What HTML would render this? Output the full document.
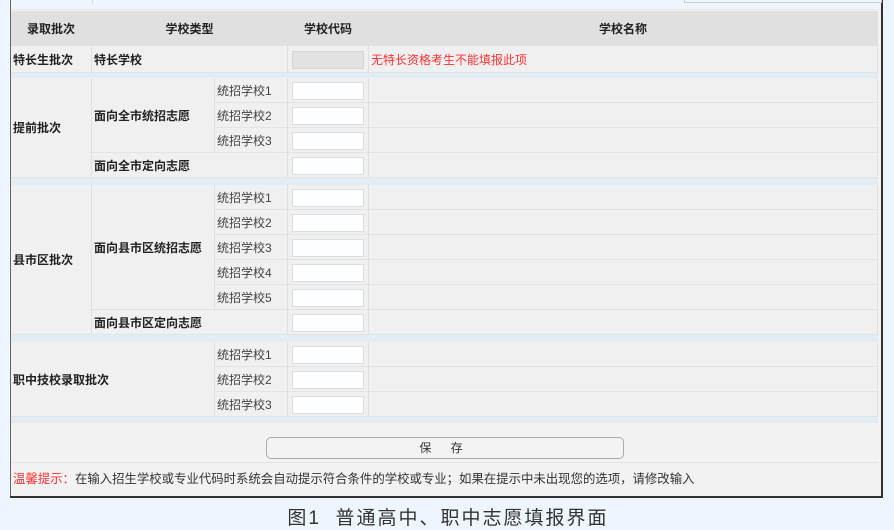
<!DOCTYPE html>
<html><head><meta charset="utf-8"><style>
*{margin:0;padding:0;box-sizing:border-box}
body{width:894px;height:529px;background:#eef5fd;position:relative;overflow:hidden;font-family:"Liberation Sans","Noto Sans CJK SC",sans-serif;font-size:12px;color:#222}
.c{position:absolute;background:#f0f0f0;border-right:1px solid #e0e0e0;border-bottom:1px solid #e3e3e3;display:flex;align-items:center;padding-left:2px;font-weight:bold}
.n{font-weight:normal;color:#444}
.h{background:#e0e0e0;justify-content:center;padding:0;font-weight:bold}
.sep{position:absolute;left:11px;width:867px;background:#e2ecf5}
.in{position:absolute;left:292px;width:72px;height:18px;background:#fdfeff;border:1px solid #ddd}
</style></head><body>
<div style="position:absolute;left:10px;top:0;width:1px;height:497px;background:#666"></div>
<div style="position:absolute;left:881px;top:0;width:2px;height:497px;background:#333"></div>
<div style="position:absolute;left:10px;top:496px;width:873px;height:2px;background:#333"></div>
<div style="position:absolute;left:92px;top:0;width:1px;height:4px;background:#ddd"></div>
<div style="position:absolute;left:684px;top:0;width:198px;height:3px;border:1px solid #ccc;border-top:0"></div>
<div style="position:absolute;left:11px;top:9px;width:870px;height:487px;background:#f2f2f2;border-top:1px solid #e8e8e8"></div>
<!-- header -->
<div class="c h" style="left:11px;top:11px;width:81px;height:35px">录取批次</div>
<div class="c h" style="left:92px;top:11px;width:196px;height:35px">学校类型</div>
<div class="c h" style="left:288px;top:11px;width:81px;height:35px">学校代码</div>
<div class="c h" style="left:369px;top:11px;width:509px;height:35px">学校名称</div>
<!-- 特长 -->
<div class="c" style="left:11px;top:46px;width:81px;height:27px">特长生批次</div>
<div class="c" style="left:92px;top:46px;width:196px;height:27px">特长学校</div>
<div class="c" style="left:288px;top:46px;width:81px;height:27px"><div style="position:absolute;left:4px;top:5px;width:72px;height:18px;background:#e2e2e2;border:1px solid #d6d6d6"></div></div>
<div class="c" style="left:369px;top:46px;width:509px;height:27px;color:#f33;font-weight:normal">无特长资格考生不能填报此项</div>
<div class="sep" style="top:73px;height:5px"></div>
<!-- 提前 -->
<div class="c" style="left:11px;top:78px;width:81px;height:100px">提前批次</div>
<div class="c" style="left:92px;top:78px;width:123px;height:75px">面向全市统招志愿</div>
<div class="c n" style="left:215px;top:78px;width:73px;height:25px">统招学校1</div>
<div class="c n" style="left:215px;top:103px;width:73px;height:25px">统招学校2</div>
<div class="c n" style="left:215px;top:128px;width:73px;height:25px">统招学校3</div>
<div class="c" style="left:92px;top:153px;width:196px;height:25px">面向全市定向志愿</div>
<div class="c" style="left:288px;top:78px;width:81px;height:25px"></div>
<div class="c" style="left:288px;top:103px;width:81px;height:25px"></div>
<div class="c" style="left:288px;top:128px;width:81px;height:25px"></div>
<div class="c" style="left:288px;top:153px;width:81px;height:25px"></div>
<div class="c" style="left:369px;top:78px;width:509px;height:25px"></div>
<div class="c" style="left:369px;top:103px;width:509px;height:25px"></div>
<div class="c" style="left:369px;top:128px;width:509px;height:25px"></div>
<div class="c" style="left:369px;top:153px;width:509px;height:25px"></div>
<div class="in" style="top:82px"></div><div class="in" style="top:107px"></div><div class="in" style="top:132px"></div><div class="in" style="top:157px"></div>
<div class="sep" style="top:178px;height:7px"></div>
<!-- 县市区 -->
<div class="c" style="left:11px;top:185px;width:81px;height:150px">县市区批次</div>
<div class="c" style="left:92px;top:185px;width:123px;height:125px">面向县市区统招志愿</div>
<div class="c n" style="left:215px;top:185px;width:73px;height:25px">统招学校1</div>
<div class="c n" style="left:215px;top:210px;width:73px;height:25px">统招学校2</div>
<div class="c n" style="left:215px;top:235px;width:73px;height:25px">统招学校3</div>
<div class="c n" style="left:215px;top:260px;width:73px;height:25px">统招学校4</div>
<div class="c n" style="left:215px;top:285px;width:73px;height:25px">统招学校5</div>
<div class="c" style="left:92px;top:310px;width:196px;height:25px">面向县市区定向志愿</div>
<div class="c" style="left:288px;top:185px;width:81px;height:25px"></div>
<div class="c" style="left:288px;top:210px;width:81px;height:25px"></div>
<div class="c" style="left:288px;top:235px;width:81px;height:25px"></div>
<div class="c" style="left:288px;top:260px;width:81px;height:25px"></div>
<div class="c" style="left:288px;top:285px;width:81px;height:25px"></div>
<div class="c" style="left:288px;top:310px;width:81px;height:25px"></div>
<div class="c" style="left:369px;top:185px;width:509px;height:25px"></div>
<div class="c" style="left:369px;top:210px;width:509px;height:25px"></div>
<div class="c" style="left:369px;top:235px;width:509px;height:25px"></div>
<div class="c" style="left:369px;top:260px;width:509px;height:25px"></div>
<div class="c" style="left:369px;top:285px;width:509px;height:25px"></div>
<div class="c" style="left:369px;top:310px;width:509px;height:25px"></div>
<div class="in" style="top:189px"></div><div class="in" style="top:214px"></div><div class="in" style="top:239px"></div><div class="in" style="top:264px"></div><div class="in" style="top:289px"></div><div class="in" style="top:314px"></div>
<div class="sep" style="top:335px;height:7px"></div>
<!-- 职中 -->
<div class="c" style="left:11px;top:342px;width:204px;height:75px">职中技校录取批次</div>
<div class="c n" style="left:215px;top:342px;width:73px;height:25px">统招学校1</div>
<div class="c n" style="left:215px;top:367px;width:73px;height:25px">统招学校2</div>
<div class="c n" style="left:215px;top:392px;width:73px;height:25px">统招学校3</div>
<div class="c" style="left:288px;top:342px;width:81px;height:25px"></div>
<div class="c" style="left:288px;top:367px;width:81px;height:25px"></div>
<div class="c" style="left:288px;top:392px;width:81px;height:25px"></div>
<div class="c" style="left:369px;top:342px;width:509px;height:25px"></div>
<div class="c" style="left:369px;top:367px;width:509px;height:25px"></div>
<div class="c" style="left:369px;top:392px;width:509px;height:25px"></div>
<div class="in" style="top:346px"></div><div class="in" style="top:371px"></div><div class="in" style="top:396px"></div>
<div class="sep" style="top:417px;height:5px"></div>
<!-- save -->
<div style="position:absolute;left:11px;top:422px;width:867px;height:41px;background:#f2f2f2;border-top:1px solid #e6e6e6;border-bottom:1px solid #e3e3e3"></div>
<div style="position:absolute;left:266px;top:437px;width:358px;height:22px;border:1px solid #aaa;border-radius:5px;background:#f3f3f3;text-align:center;line-height:20px;color:#333;letter-spacing:8px">保 存</div>
<div style="position:absolute;left:11px;top:463px;width:867px;height:32px;line-height:32px;padding-left:2px;color:#333;background:#f2f2f2;font-size:12.4px"><span style="color:#f33">温馨提示：</span>在输入招生学校或专业代码时系统会自动提示符合条件的学校或专业；如果在提示中未出现您的选项，请修改输入</div>
<div style="position:absolute;left:0;top:503px;width:894px;text-align:center;font-size:19px;color:#333;letter-spacing:2px;padding-left:2px">图1&nbsp;&nbsp;普通高中、职中志愿填报界面</div>
</body></html>
